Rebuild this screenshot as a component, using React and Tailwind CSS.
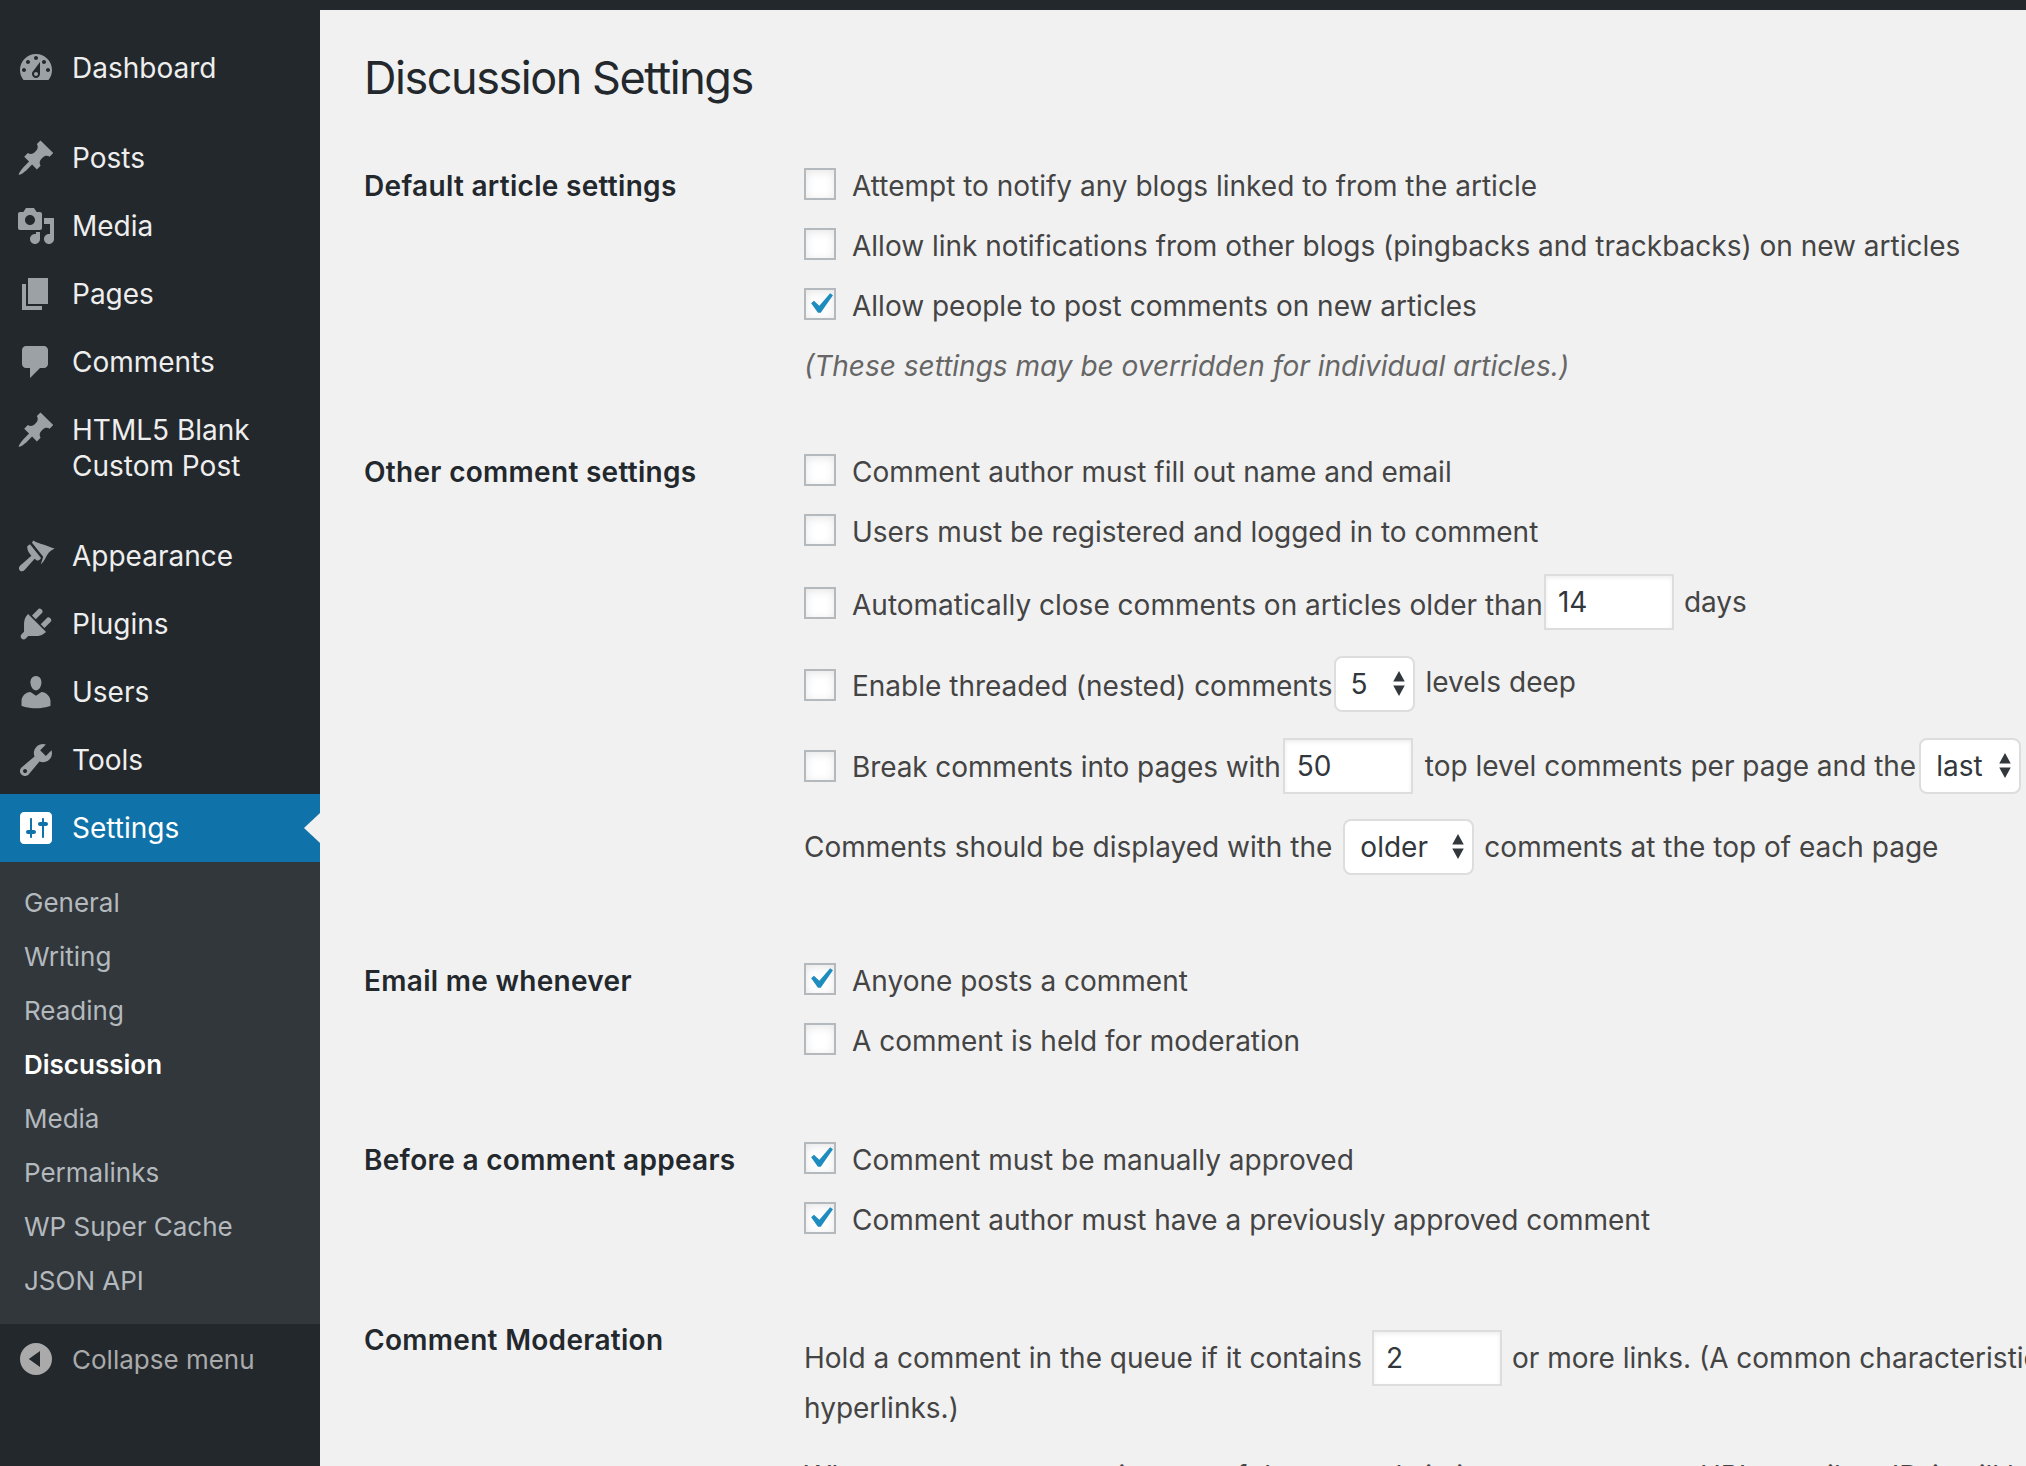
// Discussion Settings screen: admin sidebar + settings form
import React from 'react';

const ICONS = {
  dashboard: 'M3.76 16h12.48c1.1-1.37 1.76-3.11 1.76-5 0-4.42-3.58-8-8-8s-8 3.58-8 8c0 1.89.66 3.63 1.76 5zM10 4c.55 0 1 .45 1 1s-.45 1-1 1-1-.45-1-1 .45-1 1-1zM6 6c.55 0 1 .45 1 1s-.45 1-1 1-1-.45-1-1 .45-1 1-1zm8 0c.55 0 1 .45 1 1s-.45 1-1 1-1-.45-1-1 .45-1 1-1zm-5.37 5.55L12 7v6c0 1.1-.9 2-2 2s-2-.9-2-2c0-.57.24-1.08.63-1.45zM4 10c.55 0 1 .45 1 1s-.45 1-1 1-1-.45-1-1 .45-1 1-1zm12 0c.55 0 1 .45 1 1s-.45 1-1 1-1-.45-1-1 .45-1 1-1zm-5 3c0-.55-.45-1-1-1s-1 .45-1 1 .45 1 1 1 1-.45 1-1z',
  post: 'M10.44 3.02l1.82-1.82 6.36 6.35-1.83 1.82c-1.05-.68-2.48-.57-3.41.36l-.75.75c-.92.93-1.04 2.35-.35 3.41l-1.83 1.82-2.41-2.41-2.8 2.79c-.42.42-3.38 2.71-3.8 2.29s1.86-3.39 2.28-3.81l2.79-2.79L4.1 9.36l1.83-1.82c1.05.69 2.48.57 3.4-.36l.75-.75c.93-.92 1.05-2.35.36-3.41z',
  media: 'M13 11V4c0-.55-.45-1-1-1h-1.67L9 1H5L3.67 3H2c-.55 0-1 .45-1 1v7c0 .55.45 1 1 1h10c.55 0 1-.45 1-1zM7 4.5c1.38 0 2.5 1.12 2.5 2.5S8.38 9.5 7 9.5 4.5 8.38 4.5 7 5.62 4.5 7 4.5zM14 6h5v10.5c0 1.38-1.12 2.5-2.5 2.5S14 17.88 14 16.5s1.12-2.5 2.5-2.5c.17 0 .34.02.5.05V9h-3V6zm-4 8.05V13h2v3.5c0 1.38-1.12 2.5-2.5 2.5S7 17.88 7 16.5 8.12 14 9.5 14c.17 0 .34.02.5.05z',
  page: 'M6 15V2h10v13H6zm-1 1h8v2H3V5h2v11z',
  comments: 'M5 2h9c1.1 0 2 .9 2 2v7c0 1.1-.9 2-2 2h-2l-5 5v-5H5c-1.1 0-2-.9-2-2V4c0-1.1.9-2 2-2z',
  appearance: 'M8.6 2.2c1.8 1.2 3.6 1.5 5.4 2.2 1.8.7 3.6 1.4 5.3 1.8-1.5.7-2.7 1.6-3.5 2.9-.9 1.4-1.4 3.2-3.4 5.1l1.2-3.8L8 3.4zM7 4.1L12.5 11c-.5.9-1.2 1.3-2 1.3l-1.2-.9-5 5.6c-.7.8-1.7.9-2.4.2-.6-.6-.6-1.6.1-2.3l5.7-5-.9-1.2c-.9-.9-1.2-2.6-1.2-3.6z',
  plugins: 'M13.11 4.36L9.87 7.6 8 5.73l3.24-3.24c.35-.34 1.05-.2 1.56.32.52.51.66 1.21.31 1.55zm-8 1.77l.91-1.12 9.01 9.01-1.19.84c-.71.71-2.63 1.16-3.82 1.16H6.14L4.9 17.26c-.59.59-1.54.59-2.12 0-.59-.58-.59-1.53 0-2.12l1.24-1.24v-3.88c0-1.13.4-3.19 1.09-3.89zm7.26 3.97l3.24-3.24c.34-.35 1.04-.21 1.55.31.52.51.66 1.21.31 1.55l-3.24 3.25z',
  users: 'M10 9.25c-2.27 0-2.73-3.44-2.73-3.44C7 4.02 7.82 2 9.97 2c2.16 0 2.98 2.02 2.71 3.81 0 0-.41 3.44-2.68 3.44zm0 2.57L12.72 10c2.39 0 4.52 2.33 4.52 4.53v2.49s-3.65 1.13-7.24 1.13c-3.65 0-7.24-1.13-7.24-1.13v-2.49c0-2.25 1.94-4.48 4.47-4.48z',
  tools: 'M16.68 9.77c-1.34 1.34-3.3 1.67-4.95.99l-5.41 6.52c-.99.99-2.59.99-3.58 0s-.99-2.59 0-3.57l6.52-5.42c-.68-1.65-.35-3.61.99-4.95 1.28-1.28 3.12-1.62 4.72-1.06l-2.89 2.89 2.82 2.82 2.86-2.87c.53 1.58.18 3.39-1.08 4.65zM3.81 16.21c.4.39 1.04.39 1.43 0 .4-.4.4-1.04 0-1.43-.39-.4-1.03-.4-1.43 0-.39.39-.39 1.03 0 1.43z',
  settings: 'M18 16V4c0-1.1-.9-2-2-2H4c-1.1 0-2 .9-2 2v12c0 1.1.9 2 2 2h12c1.1 0 2-.9 2-2zM8 11h1c.55 0 1 .45 1 1s-.45 1-1 1H8v1.5c0 .28-.22.5-.5.5s-.5-.22-.5-.5V13H6c-.55 0-1-.45-1-1s.45-1 1-1h1V5.5c0-.28.22-.5.5-.5s.5.22.5.5V11zm5-2h-1c-.55 0-1-.45-1-1s.45-1 1-1h1V5.5c0-.28.22-.5.5-.5s.5.22.5.5V7h1c.55 0 1 .45 1 1s-.45 1-1 1h-1v5.5c0 .28-.22.5-.5.5s-.5-.22-.5-.5V9z',
  collapse: 'M10 2a8 8 0 1 0 0 16 8 8 0 0 0 0-16zM12 6v8L6.4 10z',
};

const MENU_TOP = [{ icon: 'dashboard', label: 'Dashboard' }];
const MENU_MAIN = [
  { icon: 'post', label: 'Posts' },
  { icon: 'media', label: 'Media' },
  { icon: 'page', label: 'Pages' },
  { icon: 'comments', label: 'Comments' },
  { icon: 'post', label: 'HTML5 Blank Custom Post' },
];
const MENU_ADMIN = [
  { icon: 'appearance', label: 'Appearance' },
  { icon: 'plugins', label: 'Plugins' },
  { icon: 'users', label: 'Users' },
  { icon: 'tools', label: 'Tools' },
];
const SUBMENU = ['General', 'Writing', 'Reading', 'Discussion', 'Media', 'Permalinks', 'WP Super Cache', 'JSON API'];

function Dashicon({ name, className }) {
  return (
    <svg viewBox="0 0 20 20" className={`w-10 h-10 shrink-0 fill-current ${className}`}>
      <path fillRule="evenodd" d={ICONS[name]} />
    </svg>
  );
}

function MenuItem({ icon, label }) {
  return (
    <div className="flex items-start pl-4 py-4 text-[28px] leading-[36px] text-[#eeeeee]">
      <Dashicon name={icon} className="text-[#9ca1a6] -my-0.5" />
      <span className="ml-4 w-[220px]">{label}</span>
    </div>
  );
}

function Sidebar() {
  return (
    <aside className="w-[320px] shrink-0 bg-[#23282d] pt-[34px] h-[1466px]">
      {MENU_TOP.map(m => <MenuItem key={m.label} {...m} />)}
      <div className="h-[22px]" />
      {MENU_MAIN.map(m => <MenuItem key={m.label} {...m} />)}
      <div className="h-[22px]" />
      {MENU_ADMIN.map(m => <MenuItem key={m.label} {...m} />)}

      <div className="relative flex items-start pl-4 py-4 bg-[#0f73aa] text-[28px] leading-[36px] text-white">
        <Dashicon name="settings" className="text-white -my-0.5" />
        <span className="ml-4">Settings</span>
        <div className="absolute right-0 top-[19px] w-0 h-0 border-y-[15px] border-y-transparent border-r-[16px] border-r-[#f1f1f1]" />
      </div>

      <div className="bg-[#32373c] pt-[13px] pb-[17px]">
        {SUBMENU.map(s => (
          <div
            key={s}
            className={`pl-6 h-[54px] flex items-center text-[26px] ${s === 'Discussion' ? 'text-white font-semibold' : 'text-[#b4b9be]'}`}
          >
            {s}
          </div>
        ))}
      </div>

      <div className="flex items-center pl-4 pt-[14px] text-[26px] leading-[40px] text-[#aaaaaa]">
        <Dashicon name="collapse" className="text-[#aaaaaa]" />
        <span className="ml-4 mt-[2px]">Collapse menu</span>
      </div>
    </aside>
  );
}

function Checkbox({ checked, className = '' }) {
  return (
    <span className={`relative block w-8 h-8 shrink-0 bg-white border-2 border-[#b4b9be] shadow-[inset_0_2px_10px_rgba(0,0,0,0.1)] ${className}`}>
      {checked && (
        <svg viewBox="0 0 20 20" className="absolute left-[-7px] top-[-7px] w-[42px] h-[42px] fill-[#1e8cbe]">
          <path d="M14.83 4.89l1.34.94-5.81 8.38H9.02L5.78 9.67l1.34-1.25 2.57 2.4z" />
        </svg>
      )}
    </span>
  );
}

function NumberBox({ value, className = '' }) {
  return (
    <input
      readOnly
      value={value}
      className={`block w-[130px] h-[56px] px-3 bg-white border-2 border-[#dddddd] shadow-[inset_0_2px_4px_rgba(0,0,0,0.07)] text-[28px] text-[#32373c] outline-none ${className}`}
    />
  );
}

function SelectBox({ value, width, className = '' }) {
  return (
    <div className={`relative flex items-center h-[56px] pl-[15px] bg-white border-2 border-[#dddddd] rounded-lg text-[28px] text-[#32373c] ${width} ${className}`}>
      {value}
      <svg viewBox="0 0 14 26" className="absolute right-[7px] top-[13px] w-[14px] h-[25px] fill-[#32373c]">
        <path d="M7 0l6 11H1zM7 26L1 15h12z" />
      </svg>
    </div>
  );
}

function CheckRow({ checked, children }) {
  return (
    <div className="flex items-center h-[60px]">
      <Checkbox checked={checked} className="mb-[4px]" />
      <span className="ml-4 whitespace-nowrap">{children}</span>
    </div>
  );
}

function Section({ title, className = '', children }) {
  return (
    <section className={`grid grid-cols-[440px_1fr] ${className}`}>
      <h2 className="h-[60px] flex items-center text-[28px] font-semibold tracking-[0.3px] text-[#23282d]">{title}</h2>
      <div className="min-w-0">{children}</div>
    </section>
  );
}

function SettingsForm() {
  return (
    <main className="flex-1 min-w-0 bg-[#f1f1f1] mt-[10px] pl-[44px] text-[28px] text-[#444444]">
      <h1 className="h-[146px] pt-[34px] text-[45px] leading-[68px] tracking-[-1.45px] font-normal text-[#23282d]">Discussion Settings</h1>

      <Section title="Default article settings">
        <CheckRow>Attempt to notify any blogs linked to from the article</CheckRow>
        <CheckRow>Allow link notifications from other blogs (pingbacks and trackbacks) on new articles</CheckRow>
        <CheckRow checked>Allow people to post comments on new articles</CheckRow>
        <p className="h-[60px] flex items-center italic text-[#666666]">(These settings may be overridden for individual articles.)</p>
      </Section>

      <Section title="Other comment settings" className="mt-[46px]">
        <CheckRow>Comment author must fill out name and email</CheckRow>
        <CheckRow>Users must be registered and logged in to comment</CheckRow>
        <div className="flex items-center h-[80px] whitespace-nowrap">
          <Checkbox className="mt-[2px]" />
          <span className="ml-4 mt-[6px]">Automatically close comments on articles older than</span>
          <NumberBox value="14" className="ml-[1px]" />
          <span className="ml-[10px]">days</span>
        </div>
        <div className="flex items-center h-[84px] whitespace-nowrap">
          <Checkbox className="mt-[1px]" />
          <span className="ml-4 mt-[3px]">Enable threaded (nested) comments</span>
          <SelectBox value="5" width="w-[81px]" className="ml-[1px]" />
          <span className="ml-[11px] -mt-1">levels deep</span>
        </div>
        <div className="flex items-center h-[80px] whitespace-nowrap">
          <Checkbox />
          <span className="ml-4 mt-[2px] tracking-[-0.1px]">Break comments into pages with</span>
          <NumberBox value="50" className="ml-[2px]" />
          <span className="ml-3">top level comments per page and the</span>
          <SelectBox value="last" width="w-[102px]" className="ml-[3px]" />
        </div>
        <div className="flex items-center h-[82px] whitespace-nowrap">
          <span>Comments should be displayed with the</span>
          <SelectBox value="older" width="w-[131px]" className="ml-[11px]" />
          <span className="ml-[10px]">comments at the top of each page</span>
        </div>
      </Section>

      <Section title="Email me whenever" className="mt-[63px]">
        <CheckRow checked>Anyone posts a comment</CheckRow>
        <CheckRow>A comment is held for moderation</CheckRow>
      </Section>

      <Section title="Before a comment appears" className="mt-[59px]">
        <CheckRow checked>Comment must be manually approved</CheckRow>
        <CheckRow checked>Comment author must have a previously approved comment</CheckRow>
      </Section>

      <Section title="Comment Moderation" className="mt-[60px]">
        <div className="flex items-center h-[56px] mt-[20px] whitespace-nowrap">
          <span>Hold a comment in the queue if it contains</span>
          <NumberBox value="2" className="ml-[10px]" />
          <span className="ml-[10px]">or more links. (A common characteristic of comment spam is a large number of</span>
        </div>
        <p className="mt-[2px] leading-[40px]">hyperlinks.)</p>
        <p className="mt-[28px] leading-[40px] whitespace-nowrap">When a comment contains any of these words in its content, name, URL, email, or IP, it will be held in the</p>
      </Section>
    </main>
  );
}

export default function App() {
  return (
    <div className="flex w-[2026px] h-[1466px] overflow-hidden bg-[#23282d] font-['Inter',sans-serif]">
      <Sidebar />
      <SettingsForm />
    </div>
  );
}
